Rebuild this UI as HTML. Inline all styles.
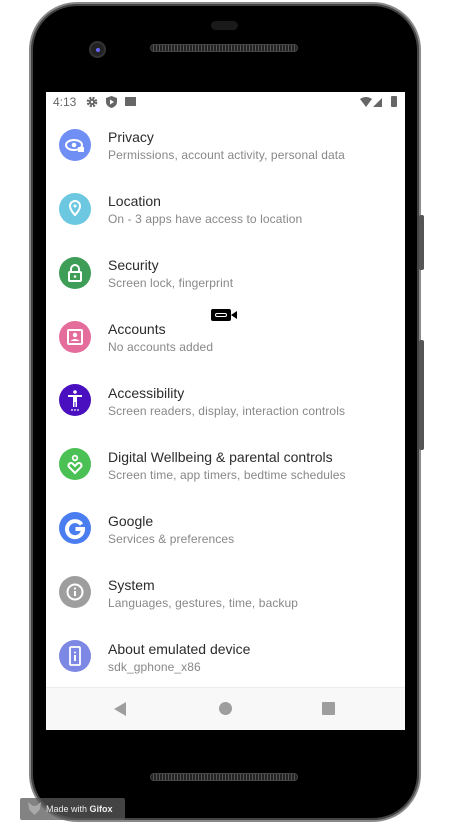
<!DOCTYPE html>
<html><head><meta charset="utf-8"><style>
*{margin:0;padding:0;box-sizing:border-box}
body{width:454px;height:840px;background:#fff;position:relative;overflow:hidden;font-family:"Liberation Sans",Roboto,sans-serif}
.phone{position:absolute;left:29px;top:2px;width:392px;height:820px;border-radius:48px;background:#000;border:2px solid #8a8a8a;box-shadow:inset 0 0 0 2px #444}
.btn{position:absolute;left:419px;width:5px;background:#555;border-radius:2px}
.screen{position:absolute;left:46px;top:92px;width:359px;height:638px;background:#fff;overflow:hidden}
.status{position:absolute;left:0;top:0;width:359px;height:20px;font-size:12px;color:#666}
.row{position:absolute;left:0;width:359px;height:64px}
.ic{position:absolute;left:13px;width:32px;height:32px;border-radius:50%}
.ic svg{position:absolute;left:0;top:0}
.t{position:absolute;left:62px;font-size:14px;color:#2b2b2b;white-space:nowrap}
.s{position:absolute;left:62px;font-size:12px;color:#888;white-space:nowrap;letter-spacing:.1px}
.nav{position:absolute;left:0;top:595px;width:359px;height:43px;background:#f8f8f8;border-top:1px solid #ececec}
.grille{position:absolute;left:150px;width:148px;height:8px;border-radius:4px;border:1px solid #444;background:repeating-linear-gradient(90deg,#222 0 2px,#555 2px 3px)}
</style></head><body>
<div class="phone"></div>
<div class="btn" style="top:215px;height:55px"></div>
<div class="btn" style="top:340px;height:110px"></div>
<div style="position:absolute;left:211px;top:21px;width:27px;height:9px;border-radius:5px;background:#1a1a1a"></div>
<div style="position:absolute;left:89px;top:41px;width:17px;height:17px;border-radius:50%;background:#222;border:2px solid #333"><div style="position:absolute;left:5px;top:5px;width:4px;height:4px;border-radius:50%;background:#66f"></div></div>
<div class="grille" style="top:44px"></div>
<div class="grille" style="top:773px"></div>
<div class="screen">
 <div class="status">
  <span style="position:absolute;left:7px;top:3px">4:13</span>
  <svg style="position:absolute;left:40px;top:4px" width="12" height="12" viewBox="0 0 12 12"><circle cx="6" cy="6" r="4" fill="none" stroke="#666" stroke-width="2.6" stroke-dasharray="2 1.2"/><circle cx="6" cy="6" r="3" fill="#666"/><circle cx="6" cy="6" r="1.2" fill="#fff"/></svg>
  <svg style="position:absolute;left:60px;top:4px" width="11" height="12" viewBox="0 0 11 12"><path d="M5.5 0L11 2v4c0 3-2.5 5-5.5 6C2.5 11 0 9 0 6V2z" fill="#666"/><path d="M4 3.5v5l4-2.5z" fill="#fff"/></svg>
  <div style="position:absolute;left:79px;top:5px;width:11px;height:9px;background:#666"></div>
  <svg style="position:absolute;left:314px;top:4px" width="26" height="12" viewBox="0 0 26 12"><path d="M0 3Q6-1 12 3L6 11z" fill="#666"/><path d="M13 11L22 2v9z" fill="#666"/></svg>
  <div style="position:absolute;left:345px;top:4px;width:6px;height:11px;background:#666;border-radius:1px"></div>
 </div>

 <div class="row" style="top:21px"><div class="ic" style="top:16px;background:#6f8ff5"><svg width="32" height="32"><ellipse cx="15" cy="16" rx="8" ry="5" fill="none" stroke="#fff" stroke-width="2"/><circle cx="15" cy="16" r="2.3" fill="#fff"/><rect x="19" y="18" width="6" height="5" fill="#fff"/></svg></div><div class="t" style="top:16px">Privacy</div><div class="s" style="top:35px">Permissions, account activity, personal data</div></div>
 <div class="row" style="top:85px"><div class="ic" style="top:16px;background:#6cc8e0"><svg width="32" height="32"><path d="M16 8a5 5 0 0 1 5 5c0 4-5 9-5 9s-5-5-5-9a5 5 0 0 1 5-5z" fill="none" stroke="#fff" stroke-width="2"/><circle cx="16" cy="13" r="1.5" fill="#fff"/></svg></div><div class="t" style="top:16px">Location</div><div class="s" style="top:35px">On - 3 apps have access to location</div></div>
 <div class="row" style="top:149px"><div class="ic" style="top:16px;background:#3e9e57"><svg width="32" height="32"><path d="M12 15v-3a4 4 0 0 1 8 0v3" fill="none" stroke="#fff" stroke-width="2"/><rect x="10" y="15" width="12" height="9" rx="1" fill="none" stroke="#fff" stroke-width="2"/><circle cx="16" cy="19.5" r="1.3" fill="#fff"/></svg></div><div class="t" style="top:16px">Security</div><div class="s" style="top:35px">Screen lock, fingerprint</div></div>
 <div class="row" style="top:213px"><div class="ic" style="top:16px;background:#e56d9c"><svg width="32" height="32"><rect x="9" y="9" width="14" height="14" rx="1" fill="none" stroke="#fff" stroke-width="2"/><circle cx="16" cy="14" r="2.2" fill="#fff"/><path d="M11.5 20q4.5-4 9 0" fill="#fff"/></svg></div><div class="t" style="top:16px">Accounts</div><div class="s" style="top:35px">No accounts added</div></div>
 <div style="position:absolute;left:165px;top:217px;width:20px;height:12px;background:#000;border-radius:2px"><div style="position:absolute;left:4px;top:4px;width:12px;height:4px;border:1px solid #fff;border-radius:2px"></div></div>
 <div style="position:absolute;left:185px;top:219px;width:0;height:0;border-top:4px solid transparent;border-bottom:4px solid transparent;border-right:6px solid #000"></div>
 <div class="row" style="top:277px"><div class="ic" style="top:15px;background:#4a0fbe"><svg width="32" height="32"><circle cx="16" cy="8" r="1.8" fill="#fff"/><path d="M9 11h14v2h-5v10h-1.5v-5h-1v5H14V13H9z" fill="#fff"/><circle cx="13" cy="26" r=".9" fill="#fff"/><circle cx="16" cy="26" r=".9" fill="#fff"/><circle cx="19" cy="26" r=".9" fill="#fff"/></svg></div><div class="t" style="top:16px">Accessibility</div><div class="s" style="top:35px">Screen readers, display, interaction controls</div></div>
 <div class="row" style="top:341px"><div class="ic" style="top:15px;background:#4bc054"><svg width="32" height="32"><circle cx="16" cy="10" r="2.3" fill="none" stroke="#fff" stroke-width="1.8"/><path d="M16 25l-6-6a2.5 2.5 0 0 1 3.5-3.5L16 18l2.5-2.5a2.5 2.5 0 0 1 3.5 3.5z" fill="none" stroke="#fff" stroke-width="2"/></svg></div><div class="t" style="top:16px">Digital Wellbeing &amp; parental controls</div><div class="s" style="top:35px">Screen time, app timers, bedtime schedules</div></div>
 <div class="row" style="top:405px"><div class="ic" style="top:15px;background:#4a7ef0"><svg width="32" height="32"><path d="M22.5 12.5A8 8 0 1 0 24 17h-7.5" fill="none" stroke="#fff" stroke-width="4"/></svg></div><div class="t" style="top:16px">Google</div><div class="s" style="top:35px">Services &amp; preferences</div></div>
 <div class="row" style="top:469px"><div class="ic" style="top:15px;background:#9e9e9e"><svg width="32" height="32"><circle cx="16" cy="16" r="7.5" fill="none" stroke="#fff" stroke-width="2"/><rect x="15" y="15" width="2" height="5" fill="#fff"/><circle cx="16" cy="12.5" r="1.1" fill="#fff"/></svg></div><div class="t" style="top:16px">System</div><div class="s" style="top:35px">Languages, gestures, time, backup</div></div>
 <div class="row" style="top:533px"><div class="ic" style="top:15px;background:#7c88e4"><svg width="32" height="32"><rect x="11" y="7" width="10" height="18" rx="1" fill="none" stroke="#fff" stroke-width="1.8"/><rect x="15" y="15" width="2" height="6" fill="#fff"/><circle cx="16" cy="12.5" r="1" fill="#fff"/></svg></div><div class="t" style="top:16px">About emulated device</div><div class="s" style="top:35px">sdk_gphone_x86</div></div>

 <div class="nav">
  <div style="position:absolute;left:68px;top:14px;width:0;height:0;border-top:7px solid transparent;border-bottom:7px solid transparent;border-right:12px solid #9e9e9e"></div>
  <div style="position:absolute;left:173px;top:14px;width:13px;height:13px;border-radius:50%;background:#9e9e9e"></div>
  <div style="position:absolute;left:276px;top:14px;width:13px;height:13px;background:#9e9e9e;border-radius:1px"></div>
 </div>
</div>
<div style="position:absolute;left:20px;top:798px;width:105px;height:22px;background:rgba(90,90,90,.75);border-radius:2px;color:#eee;font-size:9px;line-height:22px;padding-left:26px">Made with <b>Gifox</b></div>
<div style="position:absolute;left:28px;top:802px;width:13px;height:13px;background:#aaa;clip-path:polygon(0 0,35% 30%,65% 30%,100% 0,90% 60%,50% 100%,10% 60%)"></div>
</body></html>
